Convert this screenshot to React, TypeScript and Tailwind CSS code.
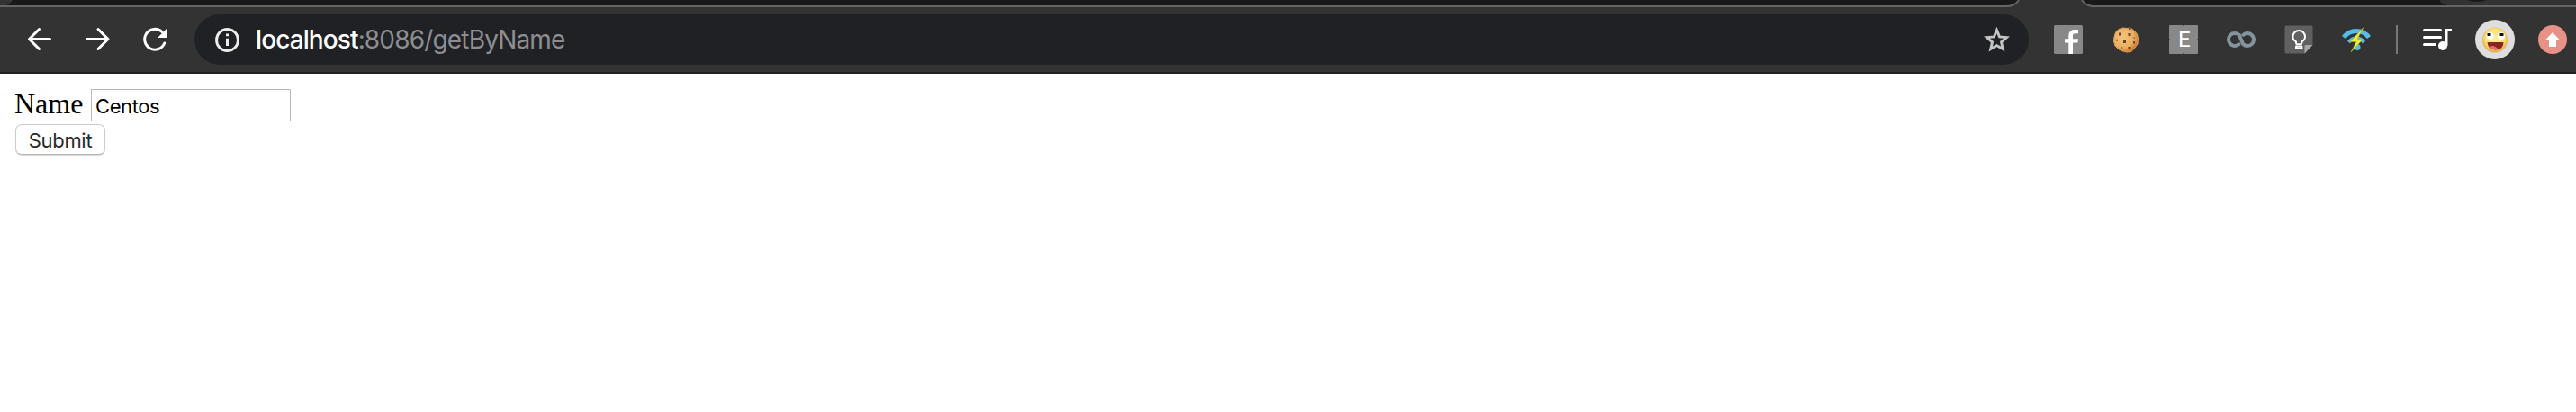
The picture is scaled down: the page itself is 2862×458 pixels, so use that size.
import React from "react";

function Strip() {
  return (
    <svg className="block h-2 w-full shrink-0" viewBox="0 0 2862 8" width="2862" height="8">
      <rect width="2862" height="8" fill="#191919" />
      <path d="M0 0H14Q11 5 7 6H0Z" fill="#333" />
      <path d="M2710 0Q2714 6 2722 6H2862V0Z" fill="#333" />
      <path d="M2741 0Q2752 4 2763 0Z" fill="#191919" />
      <rect y="6" width="2862" height="2" fill="#656565" />
      <path d="M2230 8Q2240 7 2244 0H2312Q2316 7 2326 8Z" fill="#333" />
      <path d="M2228 7Q2239 7 2243 0M2313 0Q2317 7 2328 7" stroke="#656565" strokeWidth="2" fill="none" />
    </svg>
  );
}

function Facebook() {
  return (
    <svg className="size-8" viewBox="0 0 32 32">
      <rect width="32" height="32" rx="1.5" fill="#888" />
      <path d="M16.3 32V19.5H12V15.3h4.3v-3C16.3 7.5 18.8 5 23 5h4v4.2h-2.8c-2.6 0-3.2 1.2-3.2 3v3.1h6l-.6 4.2H21V32Z" fill="#fff" />
    </svg>
  );
}

function Cookie() {
  return (
    <svg className="size-8" viewBox="0 0 32 32">
      <defs>
        <radialGradient id="dough" cx=".38" cy=".38" r=".68">
          <stop offset="0" stopColor="#f4c47c" />
          <stop offset=".65" stopColor="#e9ae62" />
          <stop offset="1" stopColor="#cb7128" />
        </radialGradient>
      </defs>
      <path d="M8 4.500l5-1.500 4 .5 4-.5 4 3 3.500 4 1 5-.5 6-3 4-4 4.500-5 .5-4-1-5-2-4-4-1.500-5 .5-5 1.500-5Z" fill="url(#dough)" stroke="#dba055" strokeWidth="1" strokeLinejoin="round" />
      <path d="M8 8.500h3v3H8zM18.500 9h3v3h-3zM13 17h3v3h-3zM18.500 24h3v2.500h-3zM24 18h2v2.500h-2zM19 3h2.500v2H19z" fill="#6b421f" />
      <path d="M5 15.500h2V18H5zM24 13h2v2h-2zM10 24h2.500v2H10z" fill="#b87a3b" />
    </svg>
  );
}

function LetterE() {
  return (
    <svg className="size-8" viewBox="0 0 32 32">
      <rect width="32" height="32" rx="1" fill="#888" />
      <path d="M15 0h2v1h-2zM15 31h2v1h-2zM0 15h1v2H0zM31 15h1v2h-1z" fill="#555" />
      <text x="10" y="24" fontSize="24" fontFamily="Roboto, sans-serif" fill="#fff">E</text>
    </svg>
  );
}

function Infinity() {
  return (
    <svg className="size-8" viewBox="0 0 32 32" fill="none" stroke="#82949e" strokeWidth="4" strokeLinecap="round" strokeLinejoin="round">
      <path d="M13.500 21.300A7 7 0 1 1 13.900 11L18.100 21A7 7 0 1 0 18.500 10.700" />
    </svg>
  );
}

function Lamp() {
  return (
    <svg className="size-8" viewBox="0 0 32 32">
      <path d="M2 .500H30Q31.500 .500 31.500 2V22L22.500 31.500H2Q.500 31.500 .500 30V2Q.500 .500 2 .500Z" fill="#606060" />
      <path d="M22.500 23.500Q22.500 22 24 22H31.500L22.500 31.500Z" fill="#a6a6a6" />
      <path d="M13 20.500V18.300C10.500 17 9.400 15 9.400 12.800a6.800 6.800 0 0 1 13.600 0c0 2.200-1.100 4.200-3.600 5.500v2.200M12.600 21.300h7.200M13 23.700h6.400v2.300H13Z" stroke="#fff" strokeWidth="2" fill="none" strokeLinejoin="round" />
    </svg>
  );
}

function Bolt() {
  return (
    <svg className="size-8" viewBox="0 0 32 32">
      <path d="M2 13.500C9 4 23 4 30 13.500" stroke="#54bce9" strokeWidth="5" fill="none" />
      <path d="M7.500 19C12 13 20 13 24.500 19" stroke="#54bce9" strokeWidth="4" fill="none" />
      <circle cx="17" cy="24.500" r="3.500" fill="#54bce9" />
      <path d="M24 2.500L9 18.500h7L10 30 23.500 15.500H17Z" fill="#f2ed30" stroke="#a9ac32" strokeWidth=".6" />
    </svg>
  );
}

function Face() {
  return (
    <svg className="size-11" viewBox="0 0 44 44">
      <defs>
        <radialGradient id="face" cx=".5" cy=".45" r=".55">
          <stop offset="0" stopColor="#fff0a0" />
          <stop offset=".7" stopColor="#fbdf76" />
          <stop offset="1" stopColor="#dda548" />
        </radialGradient>
      </defs>
      <circle cx="22" cy="22" r="22" fill="#dedede" />
      <circle cx="22" cy="22.500" r="14" fill="url(#face)" />
      <circle cx="16.500" cy="18" r="4" fill="#fff" />
      <circle cx="29" cy="18" r="4" fill="#fff" />
      <path d="M13.500 15h4v3h-4zM27.500 15h4v3h-4z" fill="#111" />
      <path d="M13.500 25H31.500C31.500 30 28 33.500 22.500 33.500S14 30 13.500 25Z" fill="#8b2420" />
      <path d="M15.500 30.500Q20 26.500 25.500 32.500Q20 34.500 15.500 30.500Z" fill="#e66b76" />
    </svg>
  );
}

export default function App() {
  return (
    <div className="flex h-[458px] w-[2862px] flex-col overflow-hidden bg-white">
      <Strip />
      <header className="flex h-[74px] shrink-0 border-b-2 border-[#231f20] bg-[#333333] pt-2">
        <nav className="flex w-[216px] items-start pt-[14px] pl-[30px]">
          <svg className="mr-[37px] h-[28px] w-[28px]" viewBox="0 0 28 28" fill="none" stroke="#fff" strokeWidth="3" strokeLinecap="round" strokeLinejoin="round">
            <path d="M13.500 2.500 2.500 13.500l11 11M2.500 13.500H25.500" />
          </svg>
          <svg className="mr-[35px] h-[28px] w-[28px]" viewBox="0 0 28 28" fill="none" stroke="#fff" strokeWidth="3" strokeLinecap="round" strokeLinejoin="round">
            <path d="M14 2.500l11 11-11 11M25 13.500H1.500" />
          </svg>
          <svg className="h-[28px] w-[28px]" viewBox="0 0 28 28">
            <path d="M22 5.500A11.400 11.400 0 1 0 24.700 18" fill="none" stroke="#fff" strokeWidth="3" strokeLinecap="round" />
            <path d="M28 1V12H17Z" fill="#fff" />
          </svg>
        </nav>
        <div className="flex h-14 w-[2038px] items-center rounded-full bg-[#202124] pr-5 pl-[22px]">
          <svg className="size-[29px]" viewBox="0 0 29 29">
            <circle cx="14.500" cy="14.500" r="12" fill="none" stroke="#ededed" strokeWidth="2.900" />
            <path d="M13 7.500h3v2.800h-3zM13 12.800h3v8.200h-3z" fill="#ededed" />
          </svg>
          <div className="ml-[17px] flex whitespace-pre font-[Inter,sans-serif] text-[28px] leading-[34px]">
            <span className="font-medium tracking-[-0.9px] text-white">localhost</span>
            <span className="tracking-[-0.83px] text-[#8d8e90]">:8086/getByName</span>
          </div>
          <svg className="ml-auto size-[31px]" viewBox="0 0 31 31">
            <path d="M15.500 4.500l3 7.400 8 .7-6 5.200 1.800 7.800-6.800-4-6.800 4 1.800-7.800-6-5.200 8-.7Z" fill="none" stroke="#c4c4c4" strokeWidth="2.900" />
          </svg>
        </div>
        <div className="flex h-14 items-center gap-8 pl-7">
          <Facebook />
          <Cookie />
          <LetterE />
          <Infinity />
          <Lamp />
          <Bolt />
        </div>
        <div className="ml-7 mt-3 h-8 w-[2px] bg-[#777]" />
        <svg className="mt-3 ml-7 size-8" viewBox="0 0 32 32" fill="none" stroke="#fff" strokeWidth="3">
          <path d="M1.500 5.500h18M1.500 13.500h18M1.500 21.500h12" strokeLinecap="round" />
          <path d="M26 23V5.500H32" />
          <circle cx="22" cy="23" r="5" fill="#fff" stroke="none" />
        </svg>
        <div className="mt-[6px] ml-[26px]"><Face /></div>
        <svg className="mt-3 ml-[26px] size-8" viewBox="0 0 32 32">
          <circle cx="16" cy="16" r="16" fill="#e89187" />
          <path d="M16 8L24.500 17H20v7H12v-7H7.500Z" fill="#fff" />
        </svg>
      </header>
      <main className="flex flex-col items-start pt-[17px] pl-4">
        <label className="flex h-9 items-start">
          <span className="w-[85px] font-['Liberation_Serif',serif] text-[32px] leading-[32px] text-black">Name</span>
          <input defaultValue="Centos" className="h-9 w-[222px] border border-[#b9b9b9] bg-white px-1 pt-[2px] font-[Inter,sans-serif] text-[22px] tracking-[-0.4px] text-black outline-none" />
        </label>
        <button className="mt-[3px] ml-[1px] h-[34px] w-[100px] rounded-[7px] border border-[#cdcdcd] border-b-[#b5b5b5] bg-white pt-px font-[Inter,sans-serif] text-[22px] leading-[30px] tracking-[-0.3px] text-[#2a2a2a] shadow-[0_1px_1px_rgba(0,0,0,0.15)]">Submit</button>
      </main>
    </div>
  );
}
